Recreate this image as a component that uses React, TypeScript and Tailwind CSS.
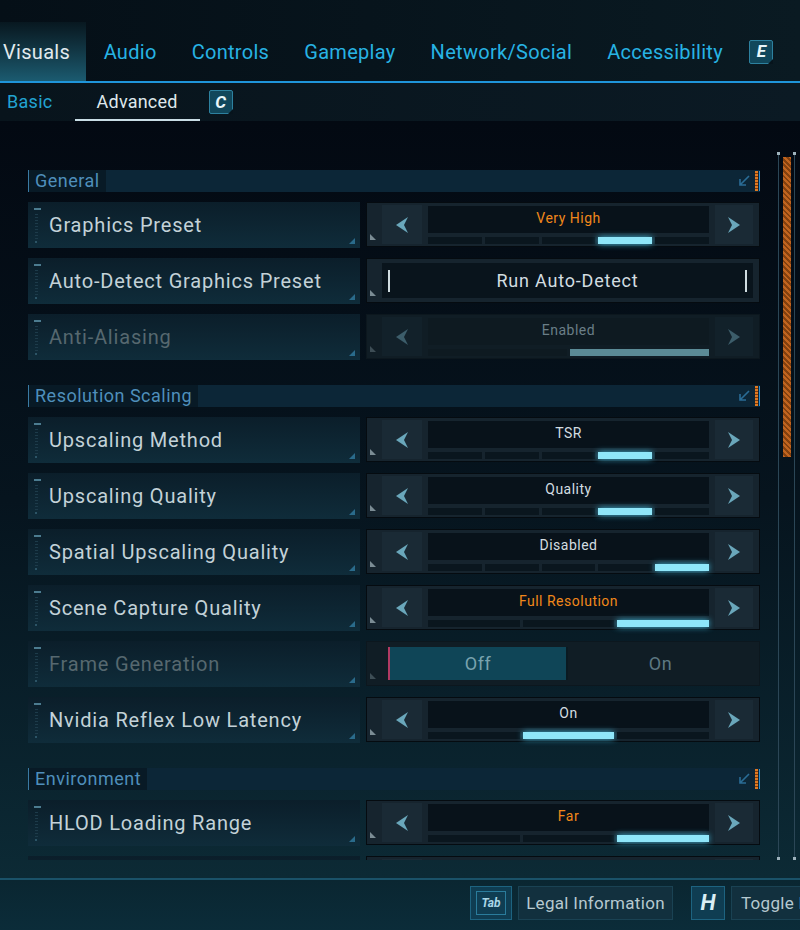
import React from "react";

type Option = {
  label: string;
  kind: "select" | "button" | "toggle";
  value?: string;
  tone?: "orange" | "white";
  segments?: number;
  active?: number;
  disabled?: boolean;
};

type Section = { title: string; rows: Option[] };

const sections: Section[] = [
  {
    title: "General",
    rows: [
      { label: "Graphics Preset", kind: "select", value: "Very High", tone: "orange", segments: 5, active: 3 },
      { label: "Auto-Detect Graphics Preset", kind: "button", value: "Run Auto-Detect" },
      { label: "Anti-Aliasing", kind: "select", value: "Enabled", segments: 2, active: 1, disabled: true },
    ],
  },
  {
    title: "Resolution Scaling",
    rows: [
      { label: "Upscaling Method", kind: "select", value: "TSR", tone: "white", segments: 5, active: 3 },
      { label: "Upscaling Quality", kind: "select", value: "Quality", tone: "white", segments: 5, active: 3 },
      { label: "Spatial Upscaling Quality", kind: "select", value: "Disabled", tone: "white", segments: 5, active: 4 },
      { label: "Scene Capture Quality", kind: "select", value: "Full Resolution", tone: "orange", segments: 3, active: 2 },
      { label: "Frame Generation", kind: "toggle", disabled: true },
      { label: "Nvidia Reflex Low Latency", kind: "select", value: "On", tone: "white", segments: 3, active: 1 },
    ],
  },
  {
    title: "Environment",
    rows: [
      { label: "HLOD Loading Range", kind: "select", value: "Far", tone: "orange", segments: 3, active: 2 },
      // next row is scrolled out of view, only its top edge shows
      { label: "", kind: "select", value: "", tone: "orange", segments: 3, active: 2 },
    ],
  },
];

const tabs = ["Visuals", "Audio", "Controls", "Gameplay", "Network/Social", "Accessibility"];

const KeyIcon = ({ letter }: { letter: string }) => (
  <div className="relative w-[24px] h-[24px] bg-[#11475b] border border-[#2d819f] rounded-[2px] flex items-center justify-center">
    <span className="italic font-bold text-[17px] text-[#e8f6fa] leading-none">{letter}</span>
    <div className="absolute right-[-1px] bottom-[-1px] w-0 h-0 border-l-[5px] border-l-transparent border-b-[5px] border-b-[#07141c]" />
  </div>
);

const Chevron = ({ dir, dim }: { dir: "left" | "right"; dim?: boolean }) => (
  <svg width="14" height="18" viewBox="0 0 14 18">
    <polygon
      points={dir === "left" ? "13,1 1,9 13,17 9,9" : "1,1 13,9 1,17 5,9"}
      fill={dim ? "#3c5d6a" : "#6aa7bb"}
    />
  </svg>
);

const SectionHeader = ({ title, first }: { title: string; first?: boolean }) => (
  <div className={`flex h-[22px] items-stretch mb-[10px] shrink-0 ${first ? "" : "mt-[15px]"}`}>
    <div className="w-[1px] bg-[#3a7ba4]" />
    <div className="pl-[6px] pr-[6px] flex items-center bg-[#081a26] text-[18px] tracking-[0.5px] text-[#4f8fbb] leading-none">
      {title}
    </div>
    <div className="flex-1 bg-[#0c2637] flex items-center justify-end">
      <svg width="14" height="14" viewBox="0 0 14 14" className="mr-[4px]">
        <path d="M12 2 L3 11 M3 5 L3 11 L9 11" stroke="#2a6c96" strokeWidth="1.6" fill="none" />
      </svg>
      <div className="w-[3px] h-[20px] bg-[repeating-linear-gradient(0deg,#e0791f_0px,#e0791f_2px,#7a3a12_2px,#7a3a12_3px)]" />
      <div className="w-[1px] h-[20px] ml-[1px] bg-[#2f8fd0]" />
    </div>
  </div>
);

const Label = ({ text, disabled }: { text: string; disabled?: boolean }) => (
  <div className="relative w-[332px] h-[46px] flex items-center pl-[21px] bg-gradient-to-b from-[#0b1e2a] to-[#0f2c3a]">
    <svg width="8" height="36" viewBox="0 0 8 36" className="absolute left-[6px] top-[5px]">
      <rect x="0" y="1" width="7" height="2" fill="#4c7c90" />
      {Array.from({ length: 9 }).map((_, i) => (
        <rect key={i} x="1" y={7 + i * 3} width="3" height="1" fill="#1d3b4a" />
      ))}
      <rect x="1" y="34" width="2" height="2" fill="#2c5466" />
    </svg>
    <span className={`text-[20px] tracking-[0.8px] leading-none ${disabled ? "text-[#56686f]" : "text-[#c3d2d8]"}`}>{text}</span>
    <svg width="8" height="8" viewBox="0 0 8 8" className="absolute right-[4px] bottom-[3px]">
      <polygon points="1,7 7,1 7,7" fill="#2a6b8b" />
    </svg>
  </div>
);

const ControlFrame = ({ children, disabled }: { children: React.ReactNode; disabled?: boolean }) => (
  <div
    className={`relative w-[394px] h-[45px] border ${
      disabled ? "bg-[#101d25] border-[#0c171e]" : "bg-[#16242e] border-[#050b10]"
    } flex items-stretch py-[2px] pr-[6px] pl-[15px]`}
  >
    <svg width="7" height="7" viewBox="0 0 7 7" className="absolute left-[3px] bottom-[5px]">
      <polygon points="0,0 6,6 0,6" fill={disabled ? "#3d4d55" : "#7b8c94"} />
    </svg>
    {children}
  </div>
);

const SelectControl = ({ row }: { row: Option }) => {
  const n = row.segments ?? 3;
  const textColor = row.disabled
    ? "text-[#6a7e87]"
    : row.tone === "orange"
    ? "text-[#f0881b]"
    : "text-[#d3dde1]";
  return (
    <ControlFrame disabled={row.disabled}>
      <div className={`w-[40px] flex items-center justify-center ${row.disabled ? "bg-[#12212a]" : "bg-[#1a2a35]"}`}>
        <Chevron dir="left" dim={row.disabled} />
      </div>
      <div className="flex-1 flex flex-col pt-[1px] px-[6px]">
        <div
          className={`h-[27px] flex justify-center pt-[5px] text-[14px] tracking-[0.5px] leading-none ${
            row.disabled ? "bg-[#0e1a21]" : "bg-[#08121a]"
          } ${textColor}`}
        >
          {row.value}
        </div>
        <div className="flex gap-[3px] mt-[4px] h-[7px]">
          {Array.from({ length: n }).map((_, i) => (
            <div
              key={i}
              className={`flex-1 ${
                i === row.active
                  ? row.disabled
                    ? "bg-[#5b8b96]"
                    : "bg-[#8fe6f9] shadow-[0_0_6px_#3fb4d6]"
                  : row.disabled
                  ? "bg-[#0e1a21]"
                  : "bg-[#0a161e]"
              }`}
            />
          ))}
        </div>
      </div>
      <div className={`w-[38px] flex items-center justify-center ${row.disabled ? "bg-[#12212a]" : "bg-[#1a2a35]"}`}>
        <Chevron dir="right" dim={row.disabled} />
      </div>
    </ControlFrame>
  );
};

const ButtonControl = ({ row }: { row: Option }) => (
  <ControlFrame>
    <div className="flex-1 flex items-center justify-between bg-[#09141c] px-[6px] my-[2px]">
      <div className="w-[2px] h-[22px] bg-[#d0dce0]" />
      <span className="text-[18px] tracking-[0.8px] text-[#d2dde1] leading-none">{row.value}</span>
      <div className="w-[2px] h-[22px] bg-[#d0dce0]" />
    </div>
  </ControlFrame>
);

const ToggleControl = () => (
  <ControlFrame disabled>
    <div className="flex-1 flex items-stretch my-[3px] ml-[6px]">
      <div className="w-[2px] bg-[#b23a63]" />
      <div className="w-[176px] bg-[#0f4557] flex items-center justify-center text-[18px] tracking-[0.5px] text-[#7aa3af] leading-none">
        Off
      </div>
      <div className="w-[2px] bg-[#0a1a22]" />
      <div className="flex-1 flex items-center justify-center text-[18px] tracking-[0.5px] text-[#5d7882] leading-none">On</div>
    </div>
  </ControlFrame>
);

const Row = ({ row }: { row: Option }) => (
  <div className="flex gap-[6px] h-[46px] mb-[10px] shrink-0">
    <Label text={row.label} disabled={row.disabled} />
    {row.kind === "select" && <SelectControl row={row} />}
    {row.kind === "button" && <ButtonControl row={row} />}
    {row.kind === "toggle" && <ToggleControl />}
  </div>
);

const App = () => {
  return (
    <div className="w-[800px] h-[930px] overflow-hidden bg-[#040a13] font-['Roboto',sans-serif] flex flex-col">
      {/* Top tabs */}
      <div className="h-[81px] flex items-end bg-gradient-to-r from-[#050f17] to-[#0a1a22] shrink-0">
        {tabs.map((t, i) => (
          <div
            key={t}
            className={`h-[59px] flex items-center text-[20px] tracking-[0.3px] leading-none ${
              i === 0
                ? "pl-[3px] pr-[16px] bg-gradient-to-b from-[#081820] to-[#1b5b70] text-[#e1eaee]"
                : "px-[17.5px] text-[#27b3e4]"
            }`}
          >
            {t}
          </div>
        ))}
        <div className="h-[59px] flex items-center ml-[9px]">
          <KeyIcon letter="E" />
        </div>
      </div>
      <div className="h-[2px] bg-[#1f95da] shrink-0" />

      {/* Sub tabs */}
      <div className="h-[38px] flex items-stretch bg-gradient-to-r from-[#08141c] to-[#0b1a24] shrink-0">
        <div className="pl-[7px] pr-[22px] flex items-center text-[18px] tracking-[0.3px] text-[#22a3d2] leading-none">Basic</div>
        <div className="px-[22px] flex items-center text-[18px] tracking-[0.2px] text-[#dfe8ec] leading-none border-b-2 border-[#c9dde5] pt-[2px]">
          Advanced
        </div>
        <div className="flex items-center ml-[9px]">
          <KeyIcon letter="C" />
        </div>
      </div>

      {/* Settings list */}
      <div className="h-[757px] flex bg-gradient-to-b from-[#030912] via-[#06141e] to-[#0c2a35] shrink-0">
        <div className="ml-[28px] w-[732px] h-[739px] pt-[49px] overflow-hidden flex flex-col">
          {sections.map((s, si) => (
            <React.Fragment key={s.title}>
              <SectionHeader title={s.title} first={si === 0} />
              {s.rows.map((r, ri) => (
                <Row key={s.title + ri} row={r} />
              ))}
            </React.Fragment>
          ))}
        </div>
        <div className="ml-[18px] mt-[33px] h-[704px] w-[17px] flex justify-between relative">
          <div className="w-[1px] h-full bg-[#2b4656]" />
          <div className="w-[8px] h-[300px] mt-[3px] bg-[repeating-linear-gradient(45deg,#c0641f_0px,#c0641f_2px,#84410f_2px,#84410f_4px)]" />
          <div className="w-[1px] h-full bg-[#2b4656]" />
          <div className="absolute left-[-1px] top-[-2px] w-[3px] h-[3px] bg-[#9fb3bd]" />
          <div className="absolute right-[-1px] top-[-2px] w-[3px] h-[3px] bg-[#9fb3bd]" />
          <div className="absolute left-[-1px] bottom-[-2px] w-[3px] h-[3px] bg-[#9fb3bd]" />
          <div className="absolute right-[-1px] bottom-[-2px] w-[3px] h-[3px] bg-[#9fb3bd]" />
        </div>
      </div>

      {/* Footer */}
      <div className="h-[2px] bg-[#1a5269] shrink-0" />
      <div className="flex-1 bg-gradient-to-b from-[#0a2631] to-[#0b2c39] flex items-start pt-[6px] pl-[470px] gap-[6px] overflow-hidden">
        <div className="w-[42px] h-[34px] bg-[#0f3d52] border border-[#1d6380] flex items-center justify-center shrink-0">
          <div className="w-[30px] h-[24px] border border-[#2a7c9c] flex items-center justify-center">
            <span className="italic font-bold text-[12px] text-[#a9d6e6] leading-none">Tab</span>
          </div>
        </div>
        <div className="w-[155px] h-[34px] bg-[#12303e] border border-[#1a4253] flex items-center justify-center shrink-0 text-[17px] tracking-[0.3px] text-[#b6c9d0] leading-none">
          Legal Information
        </div>
        <div className="w-[34px] h-[34px] ml-[12px] bg-[#0f3d52] border border-[#1d6380] flex items-center justify-center shrink-0">
          <span className="italic font-bold text-[22px] text-[#d9eef5] leading-none">H</span>
        </div>
        <div className="w-[140px] h-[34px] bg-[#12303e] border border-[#1a4253] flex items-center pl-[9px] shrink-0 text-[17px] tracking-[0.3px] text-[#b6c9d0] leading-none whitespace-nowrap">
          Toggle Benchmark
        </div>
      </div>
    </div>
  );
};

export default App;
